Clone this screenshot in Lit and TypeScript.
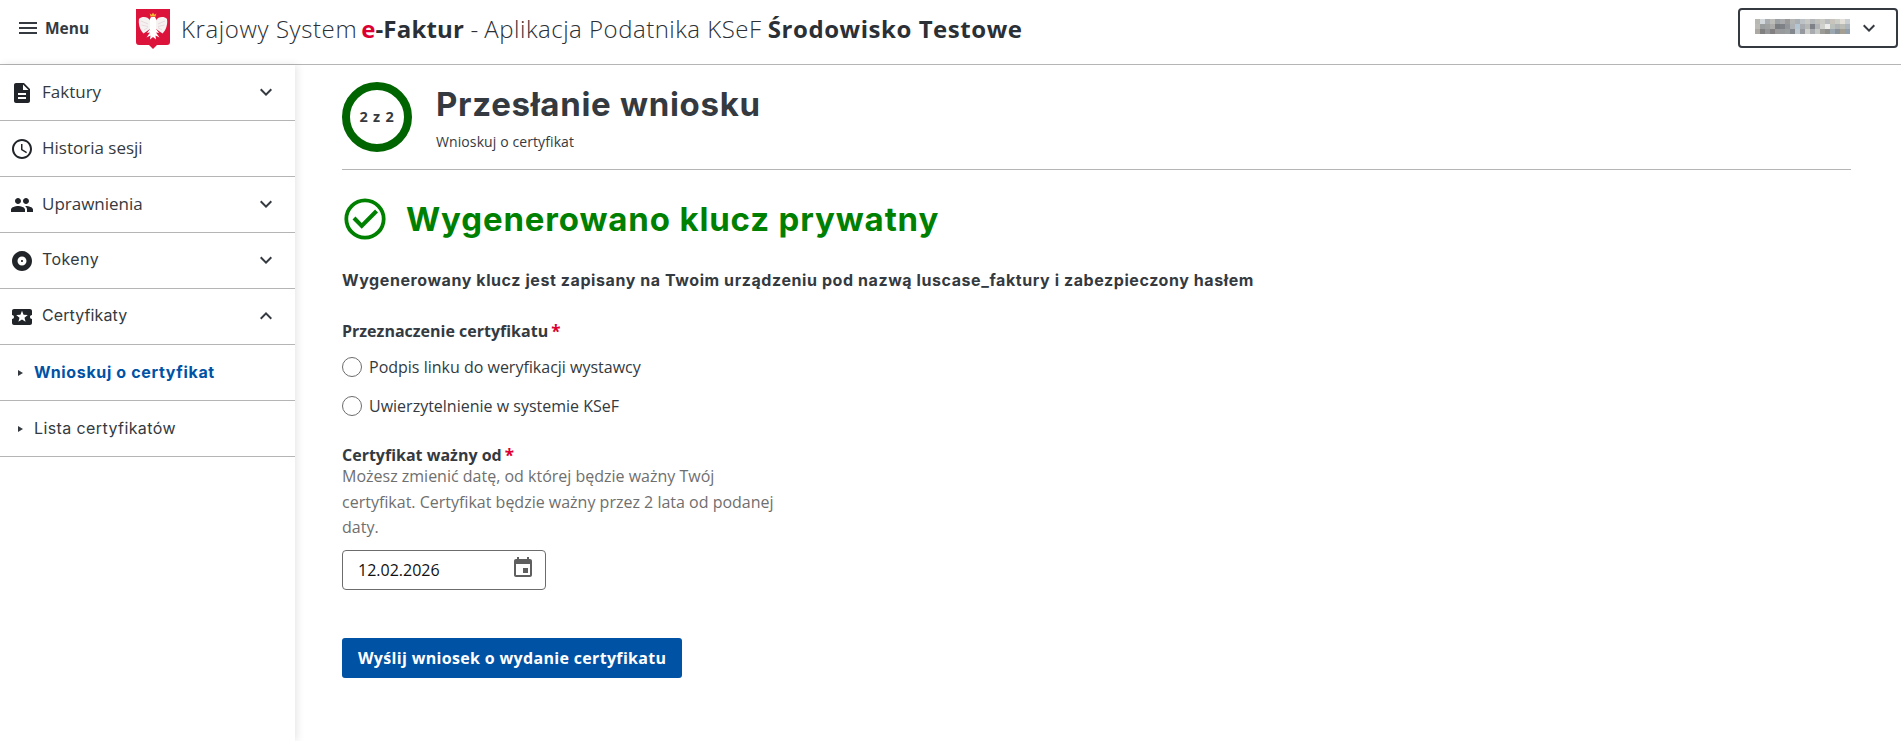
import { LitElement, html, css, svg } from "lit";
import { customElement } from "lit/decorators.js";

const chevDown = html`<svg class="chev" viewBox="0 0 24 24"><path d="M7.41 8.59 12 13.17l4.59-4.58L18 10l-6 6-6-6z"/></svg>`;
const chevUp = html`<svg class="chev" viewBox="0 0 24 24"><path d="M7.41 15.41 12 10.83l4.59 4.58L18 14l-6-6-6 6z"/></svg>`;

const icons = {
  doc: svg`<path d="M14 2H6c-1.1 0-2 .9-2 2v16c0 1.1.9 2 2 2h12c1.1 0 2-.9 2-2V8l-6-6zm2 16H8v-2h8v2zm0-4H8v-2h8v2zm-3-5V3.5L18.5 9H13z"/>`,
  clock: svg`<path d="M11.99 2C6.47 2 2 6.48 2 12s4.47 10 9.99 10C17.52 22 22 17.52 22 12S17.52 2 11.99 2zM12 20c-4.42 0-8-3.58-8-8s3.58-8 8-8 8 3.58 8 8-3.58 8-8 8z"/><path d="M12.5 7H11v6l5.25 3.15.75-1.23-4.5-2.67z"/>`,
  people: svg`<path d="M16 11c1.66 0 2.99-1.34 2.99-3S17.66 5 16 5c-1.66 0-3 1.34-3 3s1.34 3 3 3zm-8 0c1.66 0 2.99-1.34 2.99-3S9.66 5 8 5C6.34 5 5 6.34 5 8s1.34 3 3 3zm0 2c-2.33 0-7 1.17-7 3.5V19h14v-2.5c0-2.33-4.67-3.5-7-3.5zm8 0c-.29 0-.62.02-.97.05 1.16.84 1.97 1.97 1.97 3.45V19h6v-2.5c0-2.33-4.67-3.5-7-3.5z"/>`,
  disc: svg`<path d="M12 2C6.48 2 2 6.48 2 12s4.48 10 10 10 10-4.48 10-10S17.52 2 12 2zm0 14.5c-2.49 0-4.5-2.01-4.5-4.5S9.51 7.5 12 7.5s4.500 2.010 4.500 4.500-2.010 4.500-4.500 4.500zm0-5.500c-.55 0-1 .45-1 1s.45 1 1 1 1-.45 1-1-.45-1-1-1z"/>`,
  ticket: svg`<path d="M20 12c0-1.100.9-2 2-2V6c0-1.100-.9-2-2-2H4c-1.100 0-1.990.9-1.990 2v4c1.100 0 1.990.9 1.990 2s-.89 2-2 2v4c0 1.100.9 2 2 2h16c1.100 0 2-.9 2-2v-4c-1.100 0-2-.9-2-2zm-4.420 4.800L12 14.500l-3.580 2.300 1.080-4.120-3.290-2.690 4.240-.25L12 5.800l1.540 3.950 4.240.25-3.290 2.690 1.090 4.110z"/>`,
};

const navItems = [
  { icon: icons.doc, label: "Faktury", chev: chevDown, cls: "os" },
  { icon: icons.clock, label: "Historia sesji", chev: null, cls: "os" },
  { icon: icons.people, label: "Uprawnienia", chev: chevDown, cls: "os" },
  { icon: icons.disc, label: "Tokeny", chev: chevDown, cls: "mont wide" },
  { icon: icons.ticket, label: "Certyfikaty", chev: chevUp, cls: "mont" },
];

const blurRows = [
  ["#b8b8b2","#d2d8dc","#aaaeb0","#bcbcb8","#9ca2a4","#a8aaac","#9a9a9a","#b4b6b6","#a8b0b4","#bcc2c6","#c8c8c4","#b4b8ba","#c0c0bc","#cacac4","#b8bcbe","#c8c4bc","#cccec8","#e2e0d8","#c8ced2"],
  ["#bcbab4","#9a9e9e","#a0a2a2","#acacaa","#7a7e80","#7e8286","#92969a","#aeb2b4","#b4c6d4","#a8acb0","#b6b8b8","#7e8288","#b0b4b6","#d0d0cc","#ececea","#bcc0bc","#b0b4b4","#bcbcb6","#acb4bc"],
  ["#aca8a2","#808080","#949698","#828080","#9a9a9a","#969a9c","#9a9e9e","#82888e","#c0c8d0","#969a9e","#d0d0cc","#a8acb0","#c6c8c6","#9a9a96","#8e8e8a","#9aa6b0","#8a929a","#a49f92","#92a0ae"],
];

@customElement("app-root")
export class AppRoot extends LitElement {
  static styles = css`
    :host { display: block; height: 741px; overflow: hidden; background: #fff; color: #343a40; font-family: "Open Sans", sans-serif; }
    .topbar { height: 56px; padding-bottom: 8px; box-sizing: content-box; border-bottom: 1px solid #b5b5b5; display: flex; align-items: center; padding-left: 16px; padding-right: 3px; }
    .menu { display: flex; align-items: center; gap: 8px; width: 120px; font-size: 15.5px; font-weight: 700; }
    .menu svg { width: 24px; height: 24px; fill: #343a40; margin-right: -3px; }
    .logo { width: 34px; height: 40px; margin-right: 11px; margin-top: 2px; flex: none; }
    .title { font-size: 24px; font-weight: 300; white-space: nowrap; flex: 1; color: #2b3036; }
    .title .k { letter-spacing: .6px; }
    .title .ap { letter-spacing: .5px; }
    .title b { font-weight: 700; letter-spacing: .55px; }
    .title .fa { letter-spacing: .2px; }
    .title .e { color: #dc0032; font-weight: 700; margin-left: 4px; }
    .account { width: 160px; height: 40px; box-sizing: border-box; border: 2px solid #343a40; border-radius: 4px; display: flex; align-items: center; justify-content: space-between; padding: 0 15px; }
    .blur { display: grid; grid-template-columns: repeat(19, 5px); grid-auto-rows: 5px; margin-top: -3px; }
    .chev { width: 24px; height: 24px; fill: #343a40; flex: none; }
    .body { display: flex; height: 676px; }
    .side { width: 295px; flex: none; box-shadow: 2px 0 8px rgba(0,0,0,.1); }
    .row { height: 55px; border-bottom: 1px solid #b5b5b5; display: flex; align-items: center; padding: 0 17px 0 10px; font-size: 17px; box-sizing: content-box; }
    .row .ic { width: 24px; height: 24px; fill: #212529; flex: none; margin-right: 8px; }
    .row .label { flex: 1; color: #343a40; margin-top: -3px; }
    .row .chev { margin-top: -2px; }
    .row .mont { font-family: "Inter", sans-serif; font-size: 16px; letter-spacing: .1px; }
    .row .wide { letter-spacing: .4px; }
    .sub { padding-left: 18px; }
    .tri { width: 0; height: 0; border-left: 5px solid #343a40; border-top: 3px solid transparent; border-bottom: 3px solid transparent; margin-right: 11px; }
    .sub .label.mont { margin-top: -2px; letter-spacing: .4px; }
    .sub.active .label.mont { color: #0052a5; font-weight: 700; letter-spacing: .65px; }
    .main { flex: 1; padding: 16px 50px 0 47px; }
    .head { display: flex; align-items: center; gap: 24px; border-bottom: 1px solid #b5b5b5; padding-bottom: 17px; height: 71px; box-sizing: content-box; }
    .ring { width: 70px; height: 70px; box-sizing: border-box; border: 8px solid #006400; border-radius: 50%; display: flex; align-items: center; justify-content: center; font-size: 14.5px; font-weight: 700; letter-spacing: .8px; flex: none; }
    .titles { padding-top: 2px; }
    h1 { margin: 0; font: 700 33px/40px "Inter", sans-serif; letter-spacing: .7px; }
    .crumb { font-size: 14px; line-height: 20px; margin-top: 8px; letter-spacing: .1px; }
    .ok { display: flex; align-items: center; gap: 19px; margin-top: 23px; color: #008000; height: 52px; }
    .ok svg { width: 52px; height: 52px; fill: #008000; margin-left: -3px; flex: none; margin-right: -4px; }
    h2 { margin: 0; font: 700 33px/40px "Inter", sans-serif; letter-spacing: .85px; }
    .lead { margin: 0; margin-top: 25px; font: 700 16px/20px "Inter", sans-serif; letter-spacing: .58px; }
    .field-label { font-size: 16px; font-weight: 700; line-height: 20px; }
    .req { color: #dc0032; margin-left: 3px; font-size: 17px; line-height: 0; vertical-align: -1px; }
    .f1 { margin-top: 31px; }
    .radios { margin-top: 6px; }
    .radio { display: flex; align-items: center; gap: 7px; height: 39px; font-size: 16px; }
    .radio i { width: 20px; height: 20px; box-sizing: border-box; border: 1px solid #6c6c6c; border-radius: 50%; flex: none; }
    .f2 { margin-top: 20px; }
    .help { width: 450px; font-size: 16px; line-height: 25.6px; color: #6f6f6f; margin-top: -1px; }
    .input { width: 204px; height: 40px; box-sizing: border-box; border: 1px solid #6c6c6c; border-radius: 4px; display: flex; align-items: center; justify-content: space-between; padding: 0 10px 0 15px; margin-top: 9px; font-size: 16px; color: #111; }
    .input svg { width: 24px; height: 24px; fill: #5f5f5f; margin-top: -3px; }
    .btn { display: inline-flex; align-items: center; height: 40px; box-sizing: border-box; margin-top: 48px; padding: 0 16px; background: #0052a5; color: #fff; border: 0; border-radius: 3px; font: 700 16px "Open Sans", sans-serif; letter-spacing: .33px; }
  `;

  render() {
    return html`
      <div class="topbar">
        <div class="menu">
          <svg viewBox="0 0 24 24"><path d="M3 18h18v-2H3v2zm0-5h18v-2H3v2zm0-7v2h18V6H3z"/></svg>
          <span>Menu</span>
        </div>
        <svg class="logo" viewBox="0 0 34 40">
          <path d="M0 0h34v33q0 3-3 3h-10l-4 4-4-4H3q-3 0-3-3z" fill="#dc143c"/>
          <path d="M14.500 7.500l-.8-3 1.800 1.200 1.500-2 1.500 2 1.800-1.200-.8 3z" fill="#f2b632"/>
          <path d="M15 8h4l1.500 3-.5 9 3 4-3-.5 3.500 5-4-2 .5 4-3-2.500-3 2.500.5-4-4 2 3.500-5-3 .5 3-4-.5-9z" fill="#fff"/>
          <path d="M14 11.500C12 7.500 6 7 3 10c-.8 5 .8 11 4.500 14.500L14 20z" fill="#f6f2f2"/>
          <path d="M20 11.500C22 7.500 28 7 31 10c.8 5-.8 11-4.500 14.500L20 20z" fill="#f6f2f2"/>
          <path d="M5 12l7 3M5.500 16l6.500 1.500M8 21l4-2.500M29 12l-7 3M28.500 16l-6.500 1.500M26 21l-4-2.500" stroke="#dcc8cc" stroke-width=".6" fill="none"/>
        </svg>
        <div class="title"><span class="k">Krajowy System</span><span class="e">e</span><b class="fa">-Faktur</b> - <span class="ap">Aplikacja Podatnika KSeF</span> <b>Środowisko Testowe</b></div>
        <div class="account">
          <div class="blur">
            ${blurRows.flat().map((c) => html`<span style="background:${c}"></span>`)}
          </div>
          ${chevDown}
        </div>
      </div>
      <div class="body">
        <nav class="side">
          ${navItems.map((n) => html`
            <div class="row">
              <svg class="ic" viewBox="0 0 24 24">${n.icon}</svg>
              <span class="label ${n.cls}">${n.label}</span>
              ${n.chev}
            </div>`)}
          <div class="row sub active"><span class="tri"></span><span class="label mont">Wnioskuj o certyfikat</span></div>
          <div class="row sub"><span class="tri"></span><span class="label mont">Lista certyfikatów</span></div>
        </nav>
        <main class="main">
          <div class="head">
            <div class="ring">2 z 2</div>
            <div class="titles">
              <h1>Przesłanie wniosku</h1>
              <div class="crumb">Wnioskuj o certyfikat</div>
            </div>
          </div>
          <div class="ok">
            <svg viewBox="0 0 48 48"><path d="M24 5a19 19 0 1 0 0 38 19 19 0 0 0 0-38zm0 3.500a15.500 15.500 0 1 1 0 31 15.500 15.500 0 0 1 0-31z"/><path d="M21 33 12.500 24.500l2.700-2.700 5.800 5.800 12.300-12.300 2.700 2.700z"/></svg>
            <h2>Wygenerowano klucz prywatny</h2>
          </div>
          <p class="lead">Wygenerowany klucz jest zapisany na Twoim urządzeniu pod nazwą luscase_faktury i zabezpieczony hasłem</p>
          <div class="f1">
            <div class="field-label">Przeznaczenie certyfikatu<span class="req">*</span></div>
            <div class="radios">
              <label class="radio"><i></i>Podpis linku do weryfikacji wystawcy</label>
              <label class="radio"><i></i>Uwierzytelnienie w systemie KSeF</label>
            </div>
          </div>
          <div class="f2">
            <div class="field-label">Certyfikat ważny od<span class="req">*</span></div>
            <div class="help">Możesz zmienić datę, od której będzie ważny Twój certyfikat. Certyfikat będzie ważny przez 2 lata od podanej daty.</div>
            <div class="input"><span>12.02.2026</span>
              <svg viewBox="0 0 24 24"><path d="M17 12h-5v5h5v-5zM16 1v2H8V1H6v2H5c-1.110 0-1.990.9-1.990 2L3 19c0 1.100.89 2 2 2h14c1.100 0 2-.9 2-2V5c0-1.100-.9-2-2-2h-1V1h-2zm3 18H5V8h14v11z"/></svg>
            </div>
          </div>
          <button class="btn">Wyślij wniosek o wydanie certyfikatu</button>
        </main>
      </div>
    `;
  }
}
